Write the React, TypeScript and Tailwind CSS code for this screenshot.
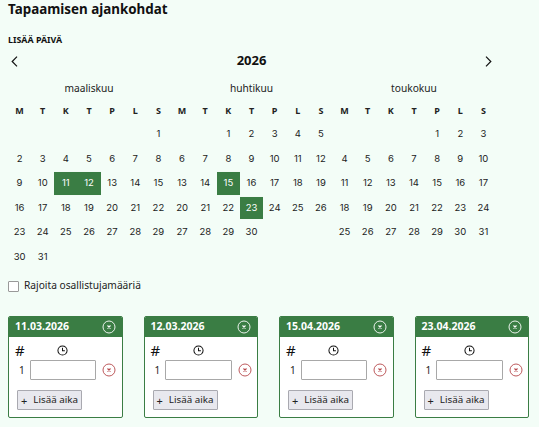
import React from "react";

const wk = ["M", "T", "K", "T", "P", "L", "S"];
const months = [
  { name: "maaliskuu", lead: 6, days: 31, sel: [11, 12] },
  { name: "huhtikuu", lead: 2, days: 30, sel: [15, 23] },
  { name: "toukokuu", lead: 4, days: 31, sel: [] as number[] },
];
const Clock = () => (
  <svg width="11" height="11" viewBox="0 0 12 12" fill="none" stroke="#111" strokeWidth="1.1">
    <circle cx="6" cy="6" r="5" />
    <path d="M6 3v3.2h2.6" />
  </svg>
);
const XCircle = ({ color }: { color: string }) => (
  <svg width="14" height="14" viewBox="0 0 14 14" fill="none" stroke={color} strokeWidth="0.9">
    <circle cx="7" cy="7" r="6" />
    <path d="M5.5 5.5l3 3M8.5 5.5l-3 3" strokeWidth="1.1" />
  </svg>
);

function Month({ m }: { m: (typeof months)[number] }) {
  const cells: (number | null)[] = [...Array(m.lead).fill(null), ...Array.from({ length: m.days }, (_, i) => i + 1)];
  return (
    <div className="w-[162px]">
      <div className="h-[22px] pt-[1px] flex items-center justify-center text-[10.2px] text-[#222]">{m.name}</div>
      <div className="grid grid-cols-7 h-[23px] items-center text-center text-[9px] font-bold text-[#222]">
        {wk.map((d, i) => (
          <div key={i}>{d}</div>
        ))}
      </div>
      <div className="grid grid-cols-7 auto-rows-[24.5px] text-center text-[9.5px] text-[#222] font-['Inter',sans-serif]">
        {cells.map((d, i) =>
          d === null ? (
            <div key={i} />
          ) : (
            <div
              key={i}
              className={
                "flex items-center justify-center " +
                (m.sel.includes(d) ? "bg-[#3a7d44] text-white border-y border-[#f1fbf4]" : "")
              }
            >
              {d}
            </div>
          )
        )}
      </div>
    </div>
  );
}

function Card({ date }: { date: string }) {
  return (
    <div className="w-[114.5px] h-[102px] rounded-[2px] border border-[#3a7d44] bg-white overflow-hidden">
      <div className="h-[20px] bg-[#3a7d44] flex items-center justify-between pl-[6px] pr-[6px] text-white text-[10.5px] font-bold">
        <span>{date}</span>
        <XCircle color="#ffffff" />
      </div>
      <div className="pl-[6px] pt-[5px]">
        <div className="flex items-center h-[16px]">
          <span className="text-[15px] leading-none text-[#111] w-[42px]">#</span>
          <Clock />
        </div>
        <div className="flex items-center h-[20px] mt-[2px]">
          <span className="w-[14.5px] pl-[4px] text-[10px] text-[#222]">1</span>
          <div className="w-[66.5px] h-[20px] border border-[#a8a8a8] rounded-[1px] bg-white" />
          <span className="ml-[6px] flex">
            <XCircle color="#b5474b" />
          </span>
        </div>
        <div className="mt-[10px] ml-[2px] w-[65px] h-[20px] border border-[#a9a9b0] rounded-[1px] bg-[#e8e8ee] flex items-center justify-center gap-[6px] text-[9.8px] text-[#222]">
          <span className="text-[11px] leading-none">+</span>
          <span>Lisää aika</span>
        </div>
      </div>
    </div>
  );
}

export default function App() {
  return (
    <div className="w-[539px] h-[427px] overflow-hidden bg-[#f3fdf7] font-['Noto_Sans',sans-serif] text-[#111] px-[8px]">
      <div className="h-[16px] text-[13.4px] leading-[18px] font-bold">Tapaamisen ajankohdat</div>
      <div className="mt-[17px] h-[14px] text-[8.9px] leading-[14px] font-bold">LISÄÄ PÄIVÄ</div>
      <div className="flex items-center justify-between w-[487px] h-[22px] mt-[3px] px-[3px]">
        <svg width="7" height="11" viewBox="0 0 7 11" fill="none" stroke="#111" strokeWidth="1.2"><path d="M6 .7L1.2 5.5 6 10.3" /></svg>
        <span className="text-[13px] font-bold">2026</span>
        <svg width="7" height="11" viewBox="0 0 7 11" fill="none" stroke="#111" strokeWidth="1.2"><path d="M1 .7l4.8 4.8L1 10.3" /></svg>
      </div>
      <div className="flex mt-[5px] w-[487px] justify-between">
        {months.map((m) => (
          <Month key={m.name} m={m} />
        ))}
      </div>
      <div className="mt-[10px] h-[14px] flex items-center gap-[5px] text-[10.2px] text-[#222]">
        <span className="w-[11px] h-[11px] border border-[#999] rounded-[1px] bg-white" />
        Rajoita osallistujamääriä
      </div>
      <div className="mt-[23px] w-[521px] flex justify-between">
        {["11.03.2026", "12.03.2026", "15.04.2026", "23.04.2026"].map((d) => (
          <Card key={d} date={d} />
        ))}
      </div>
    </div>
  );
}
